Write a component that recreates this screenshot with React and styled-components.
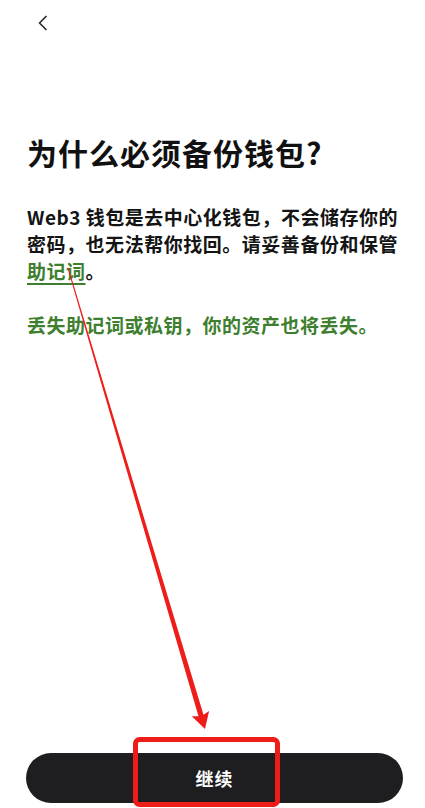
import { createGlobalStyle, styled } from "styled-components";

const GlobalStyle = createGlobalStyle`
   html, body {
      margin: 0;
      padding: 0;
      background: #ffffff;
   }
   body {
      font-family: "Noto Sans CJK SC", "Noto Sans", sans-serif;
      color: #111111;
   }
`;

// annotation arrow: thin at its start, thicker toward the head
const arrowPoints = (from, to, w0, w1, headLen, headHalf) => {
   const dx = to[0] - from[0];
   const dy = to[1] - from[1];
   const len = Math.hypot(dx, dy);
   const ux = dx / len;
   const uy = dy / len;
   const nx = uy;
   const ny = -ux;
   const bx = to[0] - ux * headLen;
   const by = to[1] - uy * headLen;
   const ex = bx + ux * 2;
   const ey = by + uy * 2;
   const pts = [
      [from[0] + nx * w0, from[1] + ny * w0],
      [ex + nx * w1, ey + ny * w1],
      [bx + nx * headHalf, by + ny * headHalf],
      [to[0], to[1]],
      [bx - nx * headHalf, by - ny * headHalf],
      [ex - nx * w1, ey - ny * w1],
      [from[0] - nx * w0, from[1] - ny * w0],
   ];
   return pts.map((p) => p.map((v) => v.toFixed(1)).join(",")).join(" ");
};

const App = () => {
   return (
      <Page>
         <GlobalStyle />
         <TopBar>
            <BackButton aria-label="back">
               <svg width="12" height="16" viewBox="0 0 12 16" fill="none">
                  <path
                     d="M9 1.5L2.5 8L9 14.5"
                     stroke="#2b2b2b"
                     strokeWidth="1.7"
                     strokeLinecap="round"
                     strokeLinejoin="round"
                  />
               </svg>
            </BackButton>
         </TopBar>

         <Content>
            <Title>为什么必须备份钱包?</Title>
            <Paragraph>
               Web3 钱包是去中心化钱包，不会储存你的密码，也无法帮你找回。请妥善备份和保管
               <Link>助记词</Link>。
            </Paragraph>
            <Warning>丢失助记词或私钥，你的资产也将丢失。</Warning>
         </Content>

         <Footer>
            <PrimaryButton>继续</PrimaryButton>
         </Footer>

         <Markup viewBox="0 0 425 808" width="425" height="808">
            <polygon
               points={arrowPoints([68, 268], [205, 729], 0.5, 2.6, 16, 9)}
               fill="#ee1d19"
            />
            <rect
               x="135.5"
               y="739.5"
               width="142"
               height="65"
               rx="4"
               fill="none"
               stroke="#ee1d19"
               strokeWidth="5"
            />
         </Markup>
      </Page>
   );
};

export default App;

const Page = styled.div`
   position: relative;
   width: 425px;
   height: 808px;
   display: flex;
   flex-direction: column;
   overflow: hidden;
   background: #ffffff;
`;

const TopBar = styled.div`
   height: 46px;
   display: flex;
   align-items: center;
   padding-left: 33px;
`;

const BackButton = styled.button`
   width: 20px;
   height: 30px;
   margin-top: 0;
   padding: 0;
   border: none;
   background: none;
   display: flex;
   align-items: center;
   justify-content: center;
   cursor: pointer;
`;

const Content = styled.div`
   padding: 0 27px;
   display: flex;
   flex-direction: column;
`;

const Title = styled.h1`
   margin: 86px 0 0;
   font-size: 30px;
   line-height: 40px;
   font-weight: 700;
   letter-spacing: 1px;
   color: #111111;
`;

const Paragraph = styled.p`
   margin: 31px 0 0;
   font-size: 19px;
   line-height: 27px;
   font-weight: 700;
   letter-spacing: 0.5px;
   text-align: justify;
   color: #141414;
`;

const Link = styled.span`
   color: #3d7f2f;
   text-decoration: underline;
   text-decoration-thickness: 2px;
   text-underline-offset: 4px;
`;

const Warning = styled.p`
   margin: 27px 0 0;
   font-size: 19px;
   line-height: 27px;
   font-weight: 700;
   letter-spacing: 0.5px;
   color: #3d7f2f;
`;

const Footer = styled.div`
   margin-top: auto;
   padding: 0 22px 5px 26px;
`;

const PrimaryButton = styled.button`
   width: 100%;
   height: 50px;
   border: none;
   border-radius: 25px;
   background: #1e1e20;
   color: #ffffff;
   font-family: "Noto Sans CJK SC", sans-serif;
   font-size: 18px;
   font-weight: 700;
   letter-spacing: 1px;
   cursor: pointer;
`;

const Markup = styled.svg`
   position: absolute;
   top: 0;
   left: 0;
   pointer-events: none;
`;
